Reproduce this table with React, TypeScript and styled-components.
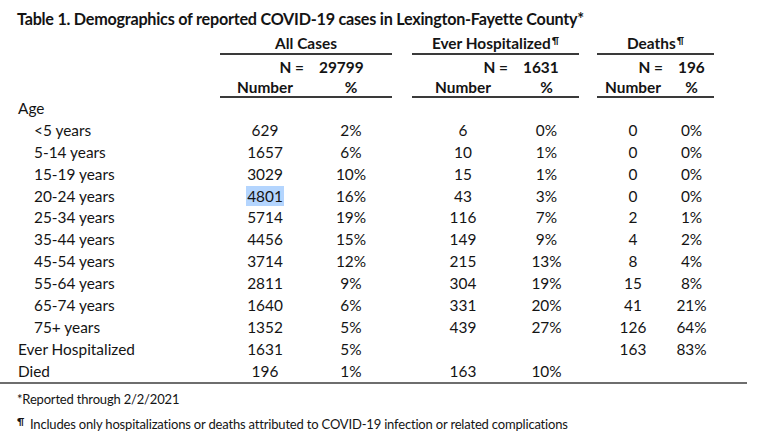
import React from 'react'
import styled, { createGlobalStyle } from 'styled-components'

type Row = {
  label: string
  indent?: boolean
  all?: [string, string]
  hosp?: [string, string]
  deaths?: [string, string]
  mark?: boolean
}

const rows: Row[] = [
  { label: 'Age' },
  { label: '<5 years', indent: true, all: ['629', '2%'], hosp: ['6', '0%'], deaths: ['0', '0%'] },
  { label: '5-14 years', indent: true, all: ['1657', '6%'], hosp: ['10', '1%'], deaths: ['0', '0%'] },
  { label: '15-19 years', indent: true, all: ['3029', '10%'], hosp: ['15', '1%'], deaths: ['0', '0%'] },
  { label: '20-24 years', indent: true, all: ['4801', '16%'], hosp: ['43', '3%'], deaths: ['0', '0%'], mark: true },
  { label: '25-34 years', indent: true, all: ['5714', '19%'], hosp: ['116', '7%'], deaths: ['2', '1%'] },
  { label: '35-44 years', indent: true, all: ['4456', '15%'], hosp: ['149', '9%'], deaths: ['4', '2%'] },
  { label: '45-54 years', indent: true, all: ['3714', '12%'], hosp: ['215', '13%'], deaths: ['8', '4%'] },
  { label: '55-64 years', indent: true, all: ['2811', '9%'], hosp: ['304', '19%'], deaths: ['15', '8%'] },
  { label: '65-74 years', indent: true, all: ['1640', '6%'], hosp: ['331', '20%'], deaths: ['41', '21%'] },
  { label: '75+ years', indent: true, all: ['1352', '5%'], hosp: ['439', '27%'], deaths: ['126', '64%'] },
  { label: 'Ever Hospitalized', all: ['1631', '5%'], deaths: ['163', '83%'] },
  { label: 'Died', all: ['196', '1%'], hosp: ['163', '10%'] },
]

export default function App() {
  return (
    <>
      <GlobalStyle />
      <Page>
        <Title>Table 1. Demographics of reported COVID-19 cases in Lexington-Fayette County*</Title>
        <Table>
          <colgroup>
            <col style={{ width: 212 }} />
            <col style={{ width: 90 }} />
            <col style={{ width: 82 }} />
            <col style={{ width: 20 }} />
            <col style={{ width: 102 }} />
            <col style={{ width: 65 }} />
            <col style={{ width: 18 }} />
            <col style={{ width: 72 }} />
            <col style={{ width: 45 }} />
          </colgroup>
          <thead>
            <GroupRow>
              <th />
              <GroupHead colSpan={2}>All Cases</GroupHead>
              <th />
              <GroupHead colSpan={2}>Ever Hospitalized<Pilcrow>¶</Pilcrow></GroupHead>
              <th />
              <GroupHead colSpan={2}>Deaths<Pilcrow>¶</Pilcrow></GroupHead>
            </GroupRow>
            <TotalRow>
              <th />
              <NLabel>N =</NLabel>
              <NValue>29799</NValue>
              <th />
              <NLabel>N =</NLabel>
              <NValue>1631</NValue>
              <th />
              <NLabel>N =</NLabel>
              <NValue>196</NValue>
            </TotalRow>
            <ColRow>
              <th />
              <ColHead>Number</ColHead>
              <ColHead>%</ColHead>
              <th />
              <ColHead>Number</ColHead>
              <ColHead>%</ColHead>
              <th />
              <ColHead>Number</ColHead>
              <ColHead>%</ColHead>
            </ColRow>
          </thead>
          <tbody>
            {rows.map((r) => (
              <BodyRow key={r.label}>
                <Label $indent={r.indent}>{r.label}</Label>
                <Cell>{r.all ? (r.mark ? <Marked>{r.all[0]}</Marked> : r.all[0]) : ''}</Cell>
                <Cell>{r.all?.[1]}</Cell>
                <Cell />
                <Cell>{r.hosp?.[0]}</Cell>
                <Cell>{r.hosp?.[1]}</Cell>
                <Cell />
                <Cell>{r.deaths?.[0]}</Cell>
                <Cell>{r.deaths?.[1]}</Cell>
              </BodyRow>
            ))}
          </tbody>
        </Table>
        <Rule />
        <Notes>
          <Note>*Reported through 2/2/2021</Note>
          <Note>
            <NoteMark>¶</NoteMark>Includes only hospitalizations or deaths attributed to COVID-19 infection or related complications
          </Note>
        </Notes>
      </Page>
    </>
  )
}

const GlobalStyle = createGlobalStyle`
  html, body {
    margin: 0;
    background: #ffffff;
  }
  body {
    font-family: Lato, "Liberation Sans", sans-serif;
    color: #141414;
  }
`

const Page = styled.div`
  width: 768px;
  height: 440px;
  padding-top: 8px;
  box-sizing: border-box;
  overflow: hidden;
`

const Title = styled.div`
  padding-left: 17px;
  font-size: 16.2px;
  font-weight: 700;
  letter-spacing: -0.25px;
  line-height: 22px;
  white-space: nowrap;
`

const Table = styled.table`
  margin-left: 8px;
  width: 706px;
  table-layout: fixed;
  border-collapse: collapse;
  font-size: 15.4px;

  th, td {
    padding: 0;
  }
`

const GroupRow = styled.tr`
  height: 24px;
`

const GroupHead = styled.th`
  font-weight: 700;
  text-align: center;
  vertical-align: bottom;
  line-height: 19px;
  border-bottom: 2px solid #3a3a3a;
  white-space: nowrap;
`

const Pilcrow = styled.sup`
  font-size: 10px;
  line-height: 0;
  margin-left: 1px;
  vertical-align: 5px;
`

const TotalRow = styled.tr`
  height: 24px;
  font-weight: 700;
`

const NLabel = styled.th`
  text-align: right;
  padding-right: 6px !important;
`

const NValue = styled.th`
  text-align: left;
  padding-left: 9px !important;
`

const ColRow = styled.tr`
  height: 18px;
`

const ColHead = styled.th`
  font-weight: 700;
  text-align: center;
  line-height: 18px;
  border-bottom: 2px solid #3a3a3a;
`

const BodyRow = styled.tr`
  height: 21.9px;
`

const Label = styled.td<{ $indent?: boolean }>`
  padding-left: ${(p) => (p.$indent ? 26 : 10)}px !important;
  white-space: nowrap;
`

const Cell = styled.td`
  text-align: center;
  white-space: nowrap;
`

const Marked = styled.span`
  background: #b4d5fe;
  padding: 1px 1px;
`

const Rule = styled.div`
  width: 747px;
  height: 2px;
  background: #6e6e6e;
`

const Notes = styled.div`
  padding-top: 4px;
`

const Note = styled.div`
  padding-left: 17px;
  font-size: 13px;
  letter-spacing: -0.18px;
  line-height: 22px;
  white-space: nowrap;
`

const NoteMark = styled.span`
  display: inline-block;
  font-size: 10px;
  font-weight: 700;
  vertical-align: 4px;
  width: 13px;
`
